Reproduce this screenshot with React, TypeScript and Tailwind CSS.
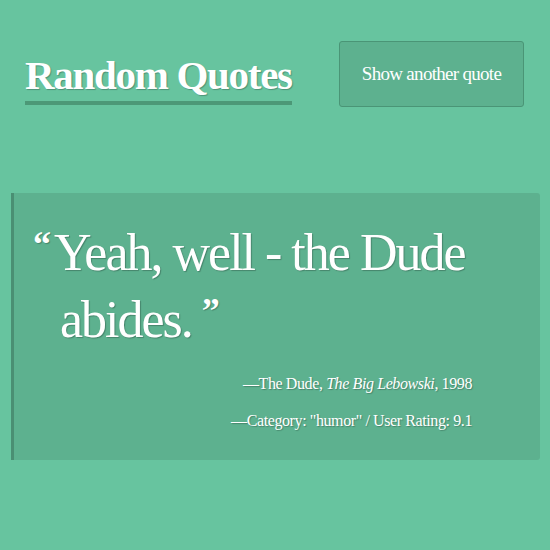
export default function App() {
  return (
    <main className="min-h-screen w-full bg-[#67c49f] text-white font-['Liberation_Serif',serif] [text-shadow:1px_1px_1px_rgba(0,0,0,0.25)]">
      <div className="flex items-start justify-between pl-[25px] pr-[26px] pt-[41px]">
        <h1 className="mt-[8px] border-b-[4px] border-[#4c9877] text-[41px] leading-[52px] font-bold tracking-[-1.3px]">
          Random Quotes
        </h1>
        <button className="h-[66px] w-[185px] rounded-[3px] border border-[#4a9576] bg-[#5db18f] text-[19px] tracking-[-0.7px] text-white">
          Show another quote
        </button>
      </div>

      <section className="mt-[86px] ml-[11px] mr-[10px] h-[267px] rounded-r-[3px] border-l-[3px] border-[#4a8f73] bg-[#5db18f] pt-[26px] pr-[16px]">
        <p className="pl-[46px] -indent-[27px] text-[52px] leading-[67px] tracking-[-2px]">
          <span className="mr-[5px] align-[14px] text-[36px] leading-[0] font-bold">“</span>
          Yeah, well - the Dude abides.
          <span className="ml-[10px] align-[14px] text-[36px] leading-[0] font-bold">”</span>
        </p>
        <div className="mt-[18px] mr-[52px] flex flex-col items-end gap-[12px] text-[16px] leading-[25px] tracking-[-0.4px]">
          <p>
            —The Dude, <i>The Big Lebowski</i>, 1998
          </p>
          <p>—Category: "humor" / User Rating: 9.1</p>
        </div>
      </section>
    </main>
  )
}
